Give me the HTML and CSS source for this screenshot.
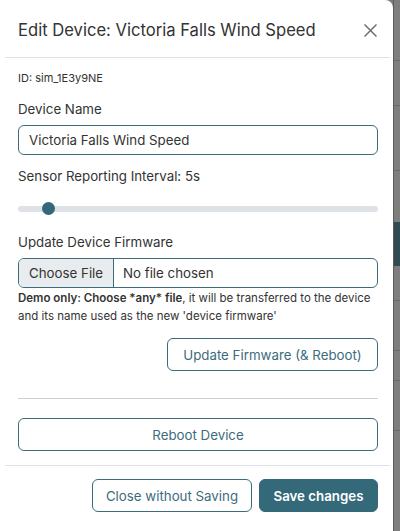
FILE: index.html
```html
<!DOCTYPE html>
<html>
<head>
    <meta charset="UTF-8">
    <title>Edit Device</title>
    <link rel="stylesheet" href="styles.css">
</head>
<body>
<div class="screen">
    <div class="modal">
        <div class="modal-head">
            <h5 class="modal-title">Edit Device: Victoria Falls Wind Speed</h5>
            <button class="btn-close" type="button">
                <svg width="13" height="13" viewBox="0 0 13 13"><path d="M0.5 0.5L12.5 12.5M12.5 0.5L0.5 12.5" stroke="#6f6f6f" stroke-width="1.5" fill="none"/></svg>
            </button>
        </div>
        <div class="modal-body">
            <p class="dev-id">ID: sim_1E3y9NE</p>
            <label class="lbl">Device Name</label>
            <div class="field field-focus">Victoria Falls Wind Speed</div>
            <label class="lbl lbl-interval">Sensor Reporting Interval: 5s</label>
            <input class="range" type="range" min="1" max="60" value="5">
            <label class="lbl lbl-fw">Update Device Firmware</label>
            <div class="file-field">
                <span class="file-btn">Choose File</span>
                <span class="file-name">No file chosen</span>
            </div>
            <p class="help"><b>Demo only: Choose *any* file</b>, it will be transferred to the device and its name used as the new 'device firmware'</p>
            <div class="right-row">
                <button class="btn btn-outline btn-fw" type="button">Update Firmware (&amp; Reboot)</button>
            </div>
            <hr class="sep">
            <button class="btn btn-outline btn-block" type="button">Reboot Device</button>
        </div>
        <div class="modal-foot">
            <button class="btn btn-outline" type="button">Close without Saving</button>
            <button class="btn btn-primary" type="button">Save changes</button>
        </div>
    </div>
    <div class="backdrop">
        <i class="row-line r1"></i>
        <i class="row-line r2"></i>
        <i class="row-line r3"></i>
        <i class="row-band"></i>
        <i class="row-line r4"></i>
        <i class="row-line r5"></i>
        <i class="row-line r6"></i>
        <i class="row-line r7"></i>
    </div>
</div>
</body>
</html>
```

FILE: styles.css
```css
*{ margin:0; padding:0; box-sizing:border-box; }
body{ font-family:Inter, "Liberation Sans", sans-serif; font-size:13.3px; color:#333; background:#7c7c7c; }
button{ font-family:inherit; white-space:nowrap; }

.screen{ display:flex; width:400px; height:531px; overflow:hidden; }
.modal{ width:393px; flex:none; background:#fff; border-radius:0 8px 0 0; padding:0 3px 0 5px; display:flex; flex-direction:column; }

.modal-head{ height:58px; border-bottom:1px solid #dee2e6; display:flex; align-items:center; justify-content:space-between; padding:3px 12px 0 13px; }
.modal-title{ font-size:16.6px; font-weight:400; color:#333; }
.btn-close{ border:0; background:none; width:13px; height:13px; display:flex; margin-right:1px; }

.modal-body{ padding:0 12px 0 13px; display:flex; flex-direction:column; }
.dev-id{ font-size:11px; line-height:16px; margin-top:12px; }
.lbl{ display:block; line-height:21px; margin-top:13px; }
.lbl-interval{ margin-top:11px; }
.lbl-fw{ margin-top:17px; }

.field{ margin-top:5px; height:30px; border:1px solid #3c6c7c; border-radius:6px; padding:0 10px; display:flex; align-items:center; }

.range{ -webkit-appearance:none; appearance:none; width:100%; height:13px; margin-top:15px; background:transparent; }
.range::-webkit-slider-runnable-track{ height:6px; border-radius:3px; background:#dee2e6; }
.range::-webkit-slider-thumb{ -webkit-appearance:none; width:13px; height:13px; border-radius:50%; background:#336878; border:0; margin-top:-3.5px; }

.file-field{ margin-top:5px; height:30px; border:1px solid #3c6c7c; border-radius:6px; display:flex; overflow:hidden; }
.file-btn{ width:95px; background:#e9ecef; border-right:1px solid #3c6c7c; display:flex; align-items:center; padding-left:10px; }
.file-name{ display:flex; align-items:center; padding-left:9px; }

.help{ font-size:11.5px; line-height:18px; margin-top:1px; }
.help b{ font-weight:600; }

.right-row{ display:flex; justify-content:flex-end; margin-top:13px; }
.btn{ height:33px; border-radius:6px; font-size:13.3px; padding:0; display:flex; align-items:center; justify-content:center; }
.btn-outline{ background:#fff; border:1px solid #3c6c7c; color:#3c6c7c; }
.btn-fw{ width:211px; }
.btn-block{ width:100%; }
.btn-primary{ background:#346979; border:1px solid #346979; color:#fff; font-weight:600; }

.sep{ border:0; border-top:1px solid #cfcfcf; margin:27px 0 19px; }

.modal-foot{ margin-top:14px; border-top:1px solid #dee2e6; display:flex; justify-content:flex-end; gap:7px; padding:13px 12px 0 0; }
.modal-foot .btn-outline{ width:160px; }
.modal-foot .btn-primary{ width:119px; }

.backdrop{ flex:1; position:relative; background:#7e7e7e; border-left:1px solid #5c5c5c; }
.row-line{ position:absolute; left:0; right:0; height:1px; background:#6c6c6c; }
.r1{ top:60px; } .r2{ top:105px; } .r3{ top:170px; } .r4{ top:300px; } .r5{ top:350px; } .r6{ top:380px; } .r7{ top:430px; }
.row-band{ position:absolute; left:0; right:0; top:222px; height:44px; background:#2f4a52; }
```
